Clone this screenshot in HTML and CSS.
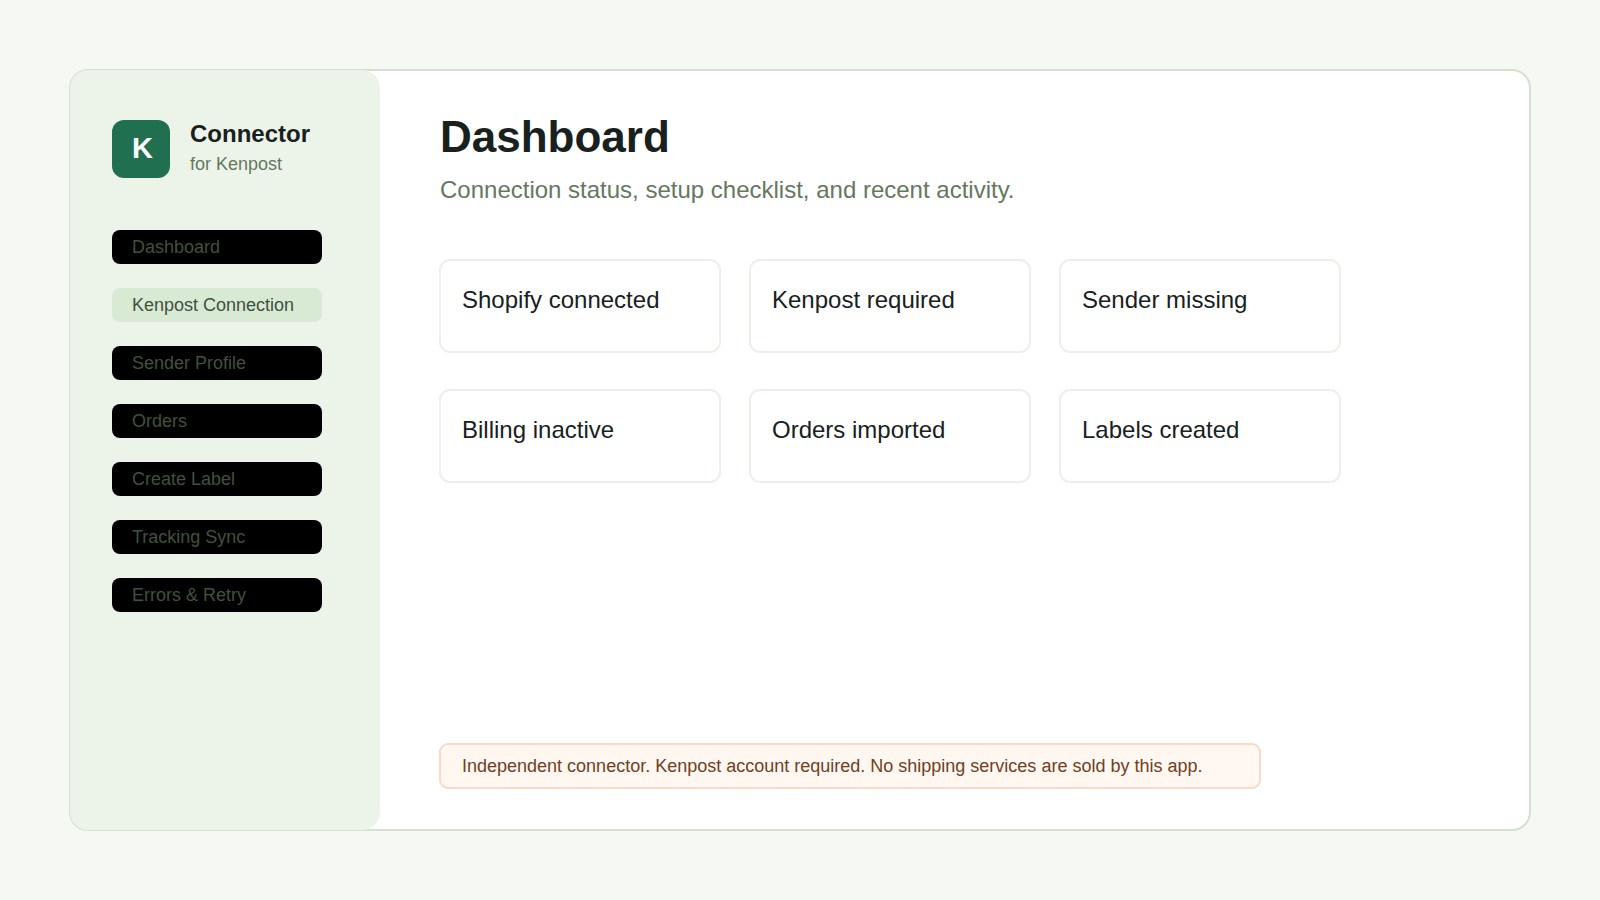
FILE: index.html
```html
<!DOCTYPE html>
<html lang="en">
<head>
<meta charset="utf-8">
<meta name="viewport" content="width=device-width, initial-scale=1">
<title>Connector for Kenpost</title>
<link rel="stylesheet" href="styles.css">
</head>
<body>
<div class="panel">
  <aside class="sidebar">
    <div class="brand">
      <div class="brand-logo">K</div>
      <div class="brand-text">
        <div class="brand-name">Connector</div>
        <div class="brand-sub">for Kenpost</div>
      </div>
    </div>
    <nav class="nav">
      <a class="nav-item" href="#">Dashboard</a>
      <a class="nav-item nav-item-active" href="#">Kenpost Connection</a>
      <a class="nav-item" href="#">Sender Profile</a>
      <a class="nav-item" href="#">Orders</a>
      <a class="nav-item" href="#">Create Label</a>
      <a class="nav-item" href="#">Tracking Sync</a>
      <a class="nav-item" href="#">Errors &amp; Retry</a>
    </nav>
  </aside>
  <main class="main">
    <h1 class="title">Dashboard</h1>
    <p class="subtitle">Connection status, setup checklist, and recent activity.</p>
    <div class="tiles">
      <div class="tile">Shopify connected</div>
      <div class="tile">Kenpost required</div>
      <div class="tile">Sender missing</div>
      <div class="tile">Billing inactive</div>
      <div class="tile">Orders imported</div>
      <div class="tile">Labels created</div>
    </div>
    <p class="notice">Independent connector. Kenpost account required. No shipping services are sold by this app.</p>
  </main>
</div>
</body>
</html>
```
FILE: styles.css
```css
* { box-sizing: border-box; }

body {
  margin: 0;
  min-height: 100vh;
  padding: 69px;
  display: flex;
  background: #f6f8f3;
  color: #18211d;
  font-family: "Liberation Sans", Arial, sans-serif;
}

.panel {
  flex: 1;
  display: flex;
  border: 2px solid #d6e0d0;
  border-radius: 19px;
  background: #fff;
}

/* Overlaps the inner half of the panel border. */
.sidebar {
  flex: 0 0 310px;
  margin: -1px 0 -1px -1px;
  padding: 50px 42px;
  border-radius: 18px;
  background: #ecf4ea;
}

.brand { display: flex; gap: 20px; }

.brand-logo {
  width: 58px;
  height: 58px;
  padding-left: 20px;
  border-radius: 12px;
  background: #1f6f50;
  color: #fff;
  font-size: 29px;
  font-weight: 700;
  line-height: 56px;
}

.brand-name { font-size: 24px; font-weight: 700; line-height: 28px; }
.brand-sub { font-size: 18px; line-height: 32px; color: #66775f; }

.nav {
  display: flex;
  flex-direction: column;
  gap: 24px;
  margin-top: 50px;
  padding-right: 16px;
}

.nav-item {
  padding: 0 20px;
  border-radius: 8px;
  background: #000;
  color: #40513d;
  font-size: 18px;
  line-height: 34px;
  text-decoration: none;
}

.nav-item-active { background: #d8ead4; }

.main {
  flex: 1;
  display: flex;
  flex-direction: column;
  align-items: flex-start;
  padding: 40px 59px;
}

.title { margin: 0; padding-left: 1px; font-size: 44px; line-height: 52px; }

.subtitle {
  margin: 12px 0 54px;
  padding-left: 1px;
  font-size: 24px;
  line-height: 30px;
  color: #66775f;
}

.tiles {
  display: grid;
  grid-template-columns: repeat(3, 1fr);
  gap: 36px 28px;
  width: 100%;
  max-width: 902px;
}

.tile {
  padding: 25px 21px 37px;
  border: 2px solid #ebf1e9;
  border-radius: 11px;
  font-size: 24px;
  line-height: 28px;
}

.notice {
  width: 100%;
  max-width: 822px;
  margin: auto 0 0;
  padding: 10px 21px;
  border: 2px solid #f5dcc8;
  border-radius: 9px;
  background: #fff7f0;
  color: #70401f;
  font-size: 18px;
  line-height: 22px;
}
```
